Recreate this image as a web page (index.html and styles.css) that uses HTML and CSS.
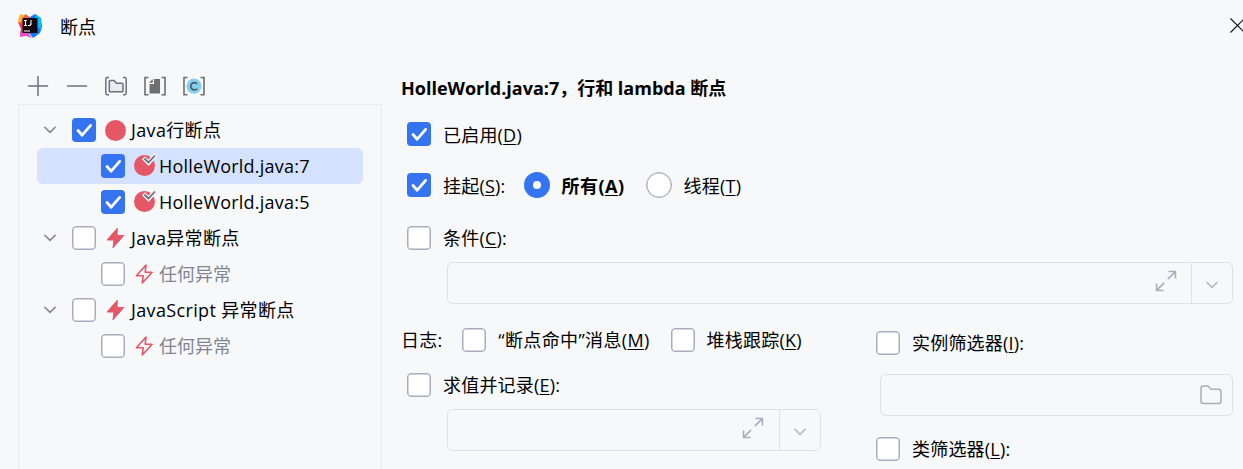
FILE: index.html
```
<!DOCTYPE html>
<html lang="zh-CN">
<head>
    <meta charset="UTF-8">
    <meta name="viewport" content="width=device-width, initial-scale=1.0">
    <title>断点</title>
    <link rel="stylesheet" href="styles.css">
</head>
<body>
    <!-- shared icons -->
    <svg class="sprite">
        <symbol id="check" viewBox="0 0 24 24"><path d="M6 12.500l4.200 4.700L18.600 7.400" fill="none" stroke="#fff" stroke-width="2.800" stroke-linecap="round" stroke-linejoin="round"/></symbol>
        <symbol id="chevron" viewBox="0 0 12 8"><path d="M.8 1.200L6 6.400l5.200-5.200" fill="none" stroke="currentColor" stroke-width="1.500" stroke-linecap="round"/></symbol>
        <symbol id="verified" viewBox="0 0 24 24"><circle cx="10.500" cy="12.500" r="10.500" fill="#e55765"/><path d="M9.500 4.800l5 5L22 1.500" fill="none" stroke="#f3f5fb" stroke-width="4.400"/><path d="M10.400 5.500l4.100 4L21 2.500" fill="none" stroke="#6c707e" stroke-width="1.800"/></symbol>
        <symbol id="bolt" viewBox="0 0 21 22"><path d="M12.300 1.200L2 13h7l-1 7.800L18.800 8.500H12z" fill="#e55765" stroke="#e55765" stroke-width="1" stroke-linejoin="round"/></symbol>
        <symbol id="bolt-line" viewBox="0 0 21 22"><path d="M12 2L2.400 12.800h6.800L8.300 20l9.800-10.700h-6.900z" fill="none" stroke="#e55765" stroke-width="1.600" stroke-linejoin="round"/></symbol>
        <symbol id="expand" viewBox="0 0 24 24"><path d="M14 10l8-8M14.800 1.700h7.500v7.500M10 14l-8 8M1.700 14.800v7.500h7.500" fill="none" stroke="#a8adbd" stroke-width="1.700"/></symbol>
    </svg>

    <div class="titlebar">
        <svg class="logo" viewBox="0 0 24 24">
            <path d="M2 0l6 2 4 2-3 8H2L0 7z" fill="#fdb32a"/>
            <path d="M7 0l5 3-1 5-9 2z" fill="#ff5a4a"/>
            <path d="M0 8l6 2 6 10-4 1-3 1H2l1-7z" fill="#fe315d"/>
            <path d="M2 17l8 2 4 5-6-2-6 1z" fill="#e950c8"/>
            <path d="M12 3l5-3 6 4 1 9-2 6-7 5-4-5z" fill="#087cfa"/>
            <path d="M17 1l6 3v11l-4-2z" fill="#07bdf5"/>
            <path d="M4.500 4h15v15h-15z" fill="#140912"/>
            <path d="M6 6.500h3M7.500 6.500v5M6 11.500h3M13 6v4.500l-1 1h-2M6 17h6" fill="none" stroke="#fff" stroke-width="1.100"/>
        </svg>
        <span class="window-title">断点</span>
        <svg class="close" viewBox="0 0 15 15"><path d="M.5.5l14 14M14.500.5l-14 14" stroke="#111" stroke-width="1.100"/></svg>
    </div>

    <div class="dialog">
        <div class="sidebar">
            <div class="toolbar">
                <svg viewBox="0 0 24 24"><path d="M12 2.500v19M2.500 12h19" stroke="#6c707e" stroke-width="1.500" stroke-linecap="round"/></svg>
                <svg viewBox="0 0 24 24"><path d="M2.500 12h19" stroke="#6c707e" stroke-width="1.500" stroke-linecap="round"/></svg>
                <svg viewBox="0 0 24 24" fill="none" stroke="#6c707e" stroke-width="1.500"><path d="M5 3.500H3Q1.800 3.500 1.800 5v14q0 1.700 1.200 1.700h2M19 3.500h2q1.200 0 1.200 1.500v14q0 1.700-1.200 1.700h-2"/><path d="M5.300 7.200q0-.8.8-.8h4l2.500 2.800h5.600q.8 0 .8.8v7q0 .8-.8.8H6.100q-.8 0-.8-.8z" fill="#ebecf0"/></svg>
                <svg viewBox="0 0 24 24"><path d="M5.500 3.500H2v17.200h3.500M18.500 3.500H22v17.200h-3.500" fill="none" stroke="#6e6e6e" stroke-width="1.600"/><path d="M11 5h6v14.500H6.500V10H11zM9.800 5v3.800H6z" fill="#6e6e6e"/></svg>
                <svg viewBox="0 0 24 24"><path d="M5.500 3.500H2v17.200h3.500M18.500 3.500H22v17.200h-3.500" fill="none" stroke="#6e6e6e" stroke-width="1.600"/><circle cx="12" cy="12.200" r="7.600" fill="#87cfeb"/><path d="M15.200 9.800a3.700 3.700 0 1 0 0 4.900" fill="none" stroke="#46606e" stroke-width="1.700"/></svg>
            </div>
            <div class="tree">
                <div class="row">
                    <svg class="chevron"><use href="#chevron"/></svg>
                    <span class="checkbox checked"><svg><use href="#check"/></svg></span>
                    <span class="dot"></span>
                    <span class="name">Java行断点</span>
                </div>
                <div class="row child selected">
                    <span class="checkbox checked"><svg><use href="#check"/></svg></span>
                    <svg class="verified"><use href="#verified"/></svg>
                    <span class="name">HolleWorld.java:7</span>
                </div>
                <div class="row child">
                    <span class="checkbox checked"><svg><use href="#check"/></svg></span>
                    <svg class="verified"><use href="#verified"/></svg>
                    <span class="name">HolleWorld.java:5</span>
                </div>
                <div class="row">
                    <svg class="chevron"><use href="#chevron"/></svg>
                    <span class="checkbox"></span>
                    <svg class="bolt"><use href="#bolt"/></svg>
                    <span class="name">Java异常断点</span>
                </div>
                <div class="row child muted">
                    <span class="checkbox"></span>
                    <svg class="bolt"><use href="#bolt-line"/></svg>
                    <span class="name">任何异常</span>
                </div>
                <div class="row">
                    <svg class="chevron"><use href="#chevron"/></svg>
                    <span class="checkbox"></span>
                    <svg class="bolt"><use href="#bolt"/></svg>
                    <span class="name">JavaScript 异常断点</span>
                </div>
                <div class="row child muted">
                    <span class="checkbox"></span>
                    <svg class="bolt"><use href="#bolt-line"/></svg>
                    <span class="name">任何异常</span>
                </div>
            </div>
        </div>

        <div class="details">
            <div class="heading">HolleWorld.java:7，行和 lambda 断点</div>
            <div class="option enabled">
                <span class="checkbox checked"><svg><use href="#check"/></svg></span>
                <span class="label">已启用(<u>D</u>)</span>
            </div>
            <div class="option suspend">
                <span class="checkbox checked"><svg><use href="#check"/></svg></span>
                <span class="label">挂起(<u>S</u>):</span>
                <span class="radio on"></span>
                <span class="label bold">所有(<u>A</u>)</span>
                <span class="radio"></span>
                <span class="label">线程(<u>T</u>)</span>
            </div>
            <div class="option condition">
                <span class="checkbox"></span>
                <span class="label">条件(<u>C</u>):</span>
            </div>
            <div class="field combo">
                <svg class="expand"><use href="#expand"/></svg>
                <span class="arrow"><svg class="chevron"><use href="#chevron"/></svg></span>
            </div>

            <div class="columns">
                <div class="logging">
                    <div class="option log">
                        <span class="label">日志:</span>
                        <span class="checkbox"></span>
                        <span class="label message"><span class="quote">“</span>断点命中<span class="quote">”</span>消息(<u>M</u>)</span>
                        <span class="checkbox"></span>
                        <span class="label">堆栈跟踪(<u>K</u>)</span>
                    </div>
                    <div class="option evaluate">
                        <span class="checkbox"></span>
                        <span class="label">求值并记录(<u>E</u>):</span>
                    </div>
                    <div class="field combo">
                        <svg class="expand"><use href="#expand"/></svg>
                        <span class="arrow"><svg class="chevron"><use href="#chevron"/></svg></span>
                    </div>
                </div>
                <div class="filters">
                    <div class="option">
                        <span class="checkbox"></span>
                        <span class="label">实例筛选器(<u>I</u>):</span>
                    </div>
                    <div class="field">
                        <svg class="folder" viewBox="0 0 22 20"><path d="M1 3.500Q1 1 3.500 1h4.300l3.400 3.200h7.300q2.500 0 2.500 2.500v9.200q0 2.500-2.500 2.500h-15Q1 18.400 1 15.900z" fill="none" stroke="#a8adbd" stroke-width="1.500"/></svg>
                    </div>
                    <div class="option">
                        <span class="checkbox"></span>
                        <span class="label">类筛选器(<u>L</u>):</span>
                    </div>
                </div>
            </div>
        </div>
    </div>
</body>
</html>
```

FILE: styles.css
```
* {
    box-sizing: border-box;
}
body {
    margin: 0;
    height: 469px;
    overflow: hidden;
    background-color: #f7f8fa;
    color: #000;
    font-family: "Open Sans", "Noto Sans CJK SC", sans-serif;
    font-size: 18px;
    line-height: 24px;
    white-space: nowrap;
}
svg {
    display: block;
    flex: none;
}
.sprite {
    display: none;
}
.titlebar {
    display: flex;
    align-items: center;
    height: 54px;
    padding-left: 18px;
}
.logo {
    width: 24px;
    height: 24px;
    margin-top: -2px;
}
.window-title {
    margin-left: 18px;
}
.close {
    width: 15px;
    height: 15px;
    margin: -3px -2px 0 auto;
}
.dialog {
    display: flex;
    height: 415px;
}
.sidebar {
    display: flex;
    flex-direction: column;
    width: 364px;
    margin-left: 18px;
}
.toolbar {
    display: flex;
    gap: 15px;
    height: 50px;
    padding: 19.5px 0 0 7.5px;
}
.toolbar svg {
    width: 24px;
    height: 24px;
}
.tree {
    flex: 1;
    padding: 7px 18px 0;
    border: 1px solid #ebecf0;
    border-bottom: none;
}
.row {
    display: flex;
    align-items: center;
    height: 36px;
    padding-left: 7px;
    border-radius: 6px;
}
.row.child {
    padding-left: 64px;
}
.row.selected {
    background-color: #d4e2ff;
}
.row.muted {
    color: #818594;
}
.name {
    letter-spacing: 0.22px;
}
.row:not(.child) .name {
    letter-spacing: 0.35px;
}
.row.muted .name {
    margin-left: -1px;
    letter-spacing: 0;
}
.chevron {
    width: 12px;
    height: 8px;
    color: #818594;
}
.row .chevron {
    margin-right: 16px;
}
.checkbox {
    flex: none;
    width: 24px;
    height: 24px;
    border: 1px solid #a8adbd;
    border-radius: 4px;
    background-color: #fff;
    box-shadow: inset 0 0 0 0.5px #a8adbd;
}
.checkbox.checked {
    border: none;
    background-color: #3574f0;
    box-shadow: none;
}
.checkbox svg {
    width: 24px;
    height: 24px;
}
.dot {
    width: 21px;
    height: 21px;
    margin: 0 5px 0 9px;
    border-radius: 50%;
    background-color: #e55765;
}
.verified {
    width: 24px;
    height: 24px;
    margin: -3px 1px 0 9px;
}
.bolt {
    width: 21px;
    height: 22px;
    margin: 0 5px 0 9px;
}
.details {
    flex: 1;
    padding: 22px 10px 0 19px;
}
.heading {
    font-weight: bold;
}
.option {
    display: flex;
    align-items: center;
    height: 26px;
    padding-left: 6px;
}
.option .label {
    margin-left: 12px;
    letter-spacing: 0.2px;
}
u {
    text-decoration-thickness: 1px;
    text-underline-offset: 2px;
}
.option .bold {
    margin-left: 11px;
    font-weight: bold;
    letter-spacing: 0.5px;
}
.enabled {
    margin-top: 21px;
}
.suspend {
    margin-top: 25px;
}
.enabled .label,
.suspend .label {
    padding-top: 2px;
}
.condition {
    margin-top: 27px;
}
.radio {
    flex: none;
    width: 26px;
    height: 26px;
    margin-left: 21px;
    border: 1px solid #a8adbd;
    border-radius: 50%;
    background-color: #fff;
    box-shadow: inset 0 0 0 0.5px #a8adbd;
}
.radio.on {
    margin-left: 19px;
    border: 9px solid #3574f0;
    box-shadow: none;
}
.field {
    display: flex;
    align-items: center;
    justify-content: flex-end;
    height: 42px;
    border: 1px solid #dfe1e5;
    border-radius: 6px;
}
.combo {
    margin: 11px 0 0 46px;
}
.expand {
    width: 22px;
    height: 22px;
    margin: -4px 14px 0 0;
}
.arrow {
    display: flex;
    align-items: center;
    justify-content: center;
    width: 41px;
    height: 40px;
    padding-top: 3px;
    border-left: 1px solid #dfe1e5;
}
.arrow .chevron {
    color: #b5b7bd;
}
.columns {
    display: flex;
    justify-content: space-between;
}
.logging {
    width: 420px;
    padding-top: 23px;
}
.logging .expand {
    margin-right: 15px;
}
.log {
    padding-left: 0;
}
.option.log .label:first-child {
    margin: 0;
}
.log .checkbox {
    margin-left: 20px;
}
.option.log .message {
    margin-right: 1px;
    letter-spacing: 0.35px;
}
.quote {
    font-family: "Open Sans", sans-serif;
}
.evaluate {
    margin-top: 19px;
}
.filters {
    width: 357px;
    padding-top: 26px;
}
.filters .option {
    padding-left: 0;
}
.filters .field {
    margin: 18px 0 20px 4px;
}
.folder {
    width: 22px;
    height: 20px;
    margin-right: 10px;
}
```
